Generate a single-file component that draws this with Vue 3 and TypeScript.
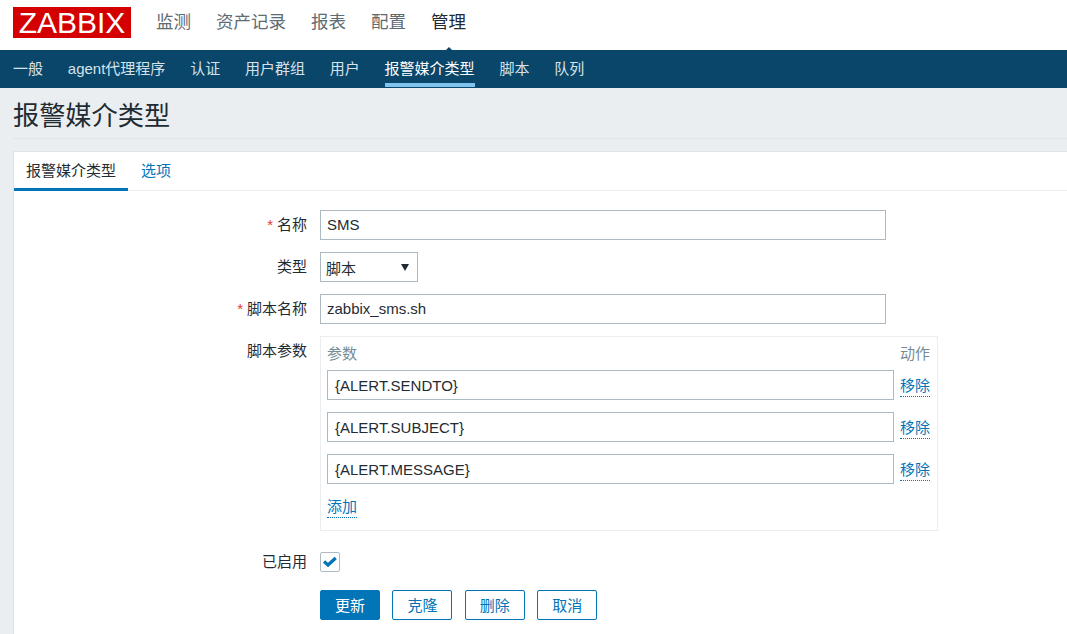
<script setup lang="ts">
const mainMenu = ['监测', '资产记录', '报表', '配置', '管理'];
const subMenu = ['一般', 'agent代理程序', '认证', '用户群组', '用户', '报警媒介类型', '脚本', '队列'];
const params = ['{ALERT.SENDTO}', '{ALERT.SUBJECT}', '{ALERT.MESSAGE}'];
const actions = ['克隆', '删除', '取消'];
</script>

<template>
  <div class="page">
    <header class="top">
      <div class="logo">ZABBIX</div>
      <nav class="main-nav">
        <a v-for="m in mainMenu" :key="m" :class="{ active: m === '管理' }">{{ m }}</a>
      </nav>
    </header>

    <nav class="sub-nav">
      <a v-for="s in subMenu" :key="s" :class="{ active: s === '报警媒介类型' }">{{ s }}</a>
    </nav>

    <div class="title-wrap">
      <h1>报警媒介类型</h1>
    </div>

    <section class="card">
      <div class="tabs">
        <a class="tab active">报警媒介类型</a>
        <a class="tab">选项</a>
      </div>

      <form class="form" @submit.prevent>
        <label class="label"><span class="req">*</span>名称</label>
        <div class="field"><div class="input wide">SMS</div></div>

        <label class="label">类型</label>
        <div class="field">
          <div class="select">脚本<span class="arrow"></span></div>
        </div>

        <label class="label"><span class="req">*</span>脚本名称</label>
        <div class="field"><div class="input wide">zabbix_sms.sh</div></div>

        <label class="label">脚本参数</label>
        <div class="field">
          <div class="params">
            <div class="params-head">
              <span>参数</span>
              <span>动作</span>
            </div>
            <div v-for="p in params" :key="p" class="param-row">
              <div class="input param-input">{{ p }}</div>
              <a class="link">移除</a>
            </div>
            <a class="link add">添加</a>
          </div>
        </div>

        <label class="label enabled-label">已启用</label>
        <div class="field enabled-field">
          <span class="check">
            <svg width="14" height="12" viewBox="0 0 14 12">
              <path d="M1 5.5 L5 9 L12.7 2" fill="none" stroke="#0275b8" stroke-width="3.2" />
            </svg>
          </span>
        </div>

        <div></div>
        <div class="buttons">
          <button type="button" class="btn primary">更新</button>
          <button v-for="a in actions" :key="a" type="button" class="btn">{{ a }}</button>
        </div>
      </form>
    </section>
  </div>
</template>

<style>
html, body {
  margin: 0;
  height: 634px;
  overflow: hidden;
  background: #fff;
}
</style>

<style scoped>
.page {
  width: 1067px;
  height: 634px;
  overflow: hidden;
  background: #ebeef0;
  font-family: "Liberation Sans", "Noto Sans CJK SC", sans-serif;
  font-size: 15px;
  color: #1f2c33;
}

.top {
  height: 50px;
  background: #fff;
  display: flex;
  padding-left: 13px;
}
.logo {
  width: 118px;
  height: 31px;
  margin-top: 7px;
  background: #d40000;
  color: #fff;
  font-size: 30px;
  line-height: 31px;
  text-align: center;
}
.main-nav {
  display: flex;
  gap: 25px;
  margin-left: 25px;
  font-size: 17.5px;
  line-height: 44px;
}
.main-nav a {
  position: relative;
  color: #5d6b73;
}
.main-nav a.active {
  color: #1f2c33;
}
.main-nav a.active::after {
  content: '';
  position: absolute;
  left: 50%;
  bottom: -6px;
  margin-left: -9px;
  border-left: 9px solid transparent;
  border-right: 9px solid transparent;
  border-bottom: 9px solid #0a466a;
}

.sub-nav {
  height: 38px;
  background: #0a466a;
  display: flex;
  gap: 24.8px;
  padding-left: 13px;
  line-height: 37px;
  color: #d6e2e9;
}
.sub-nav a {
  height: 37px;
  box-sizing: border-box;
}
.sub-nav a.active {
  color: #fff;
  border-bottom: 4px solid #7ec4ee;
}

.title-wrap {
  height: 50px;
  margin-left: 13px;
  border-bottom: 1px solid #e1e5e8;
}
h1 {
  margin: 0;
  font-size: 26.2px;
  font-weight: 400;
  line-height: 56px;
  color: #1f2c33;
}

.card {
  margin: 12px 0 0 13px;
  background: #fff;
  border: 1px solid #dfe4e7;
  border-right: none;
  height: 600px;
}

.tabs {
  display: flex;
  gap: 1px;
  height: 38px;
  border-bottom: 1px solid #ebeef0;
}
.tab {
  padding: 0 12px;
  line-height: 38px;
  height: 39px;
  box-sizing: border-box;
  color: #0275b8;
}
.tab.active {
  color: #1f2c33;
  border-bottom: 3px solid #0275b8;
}

.form {
  display: grid;
  grid-template-columns: 293px 1fr;
  column-gap: 13px;
  row-gap: 12px;
  padding-top: 19px;
}
.label {
  text-align: right;
  line-height: 30px;
}
.req {
  color: #e33734;
  margin-right: 4px;
}
.field {
  min-width: 0;
}
.input {
  box-sizing: border-box;
  height: 30px;
  border: 1px solid #acbbc2;
  background: #fff;
  padding: 0 6px;
  line-height: 28px;
}
.wide {
  width: 566px;
}
.select {
  box-sizing: border-box;
  width: 98px;
  height: 30px;
  border: 1px solid #acbbc2;
  padding-left: 5px;
  line-height: 31px;
  position: relative;
}
.arrow {
  position: absolute;
  right: 8px;
  top: 11px;
  border-left: 4px solid transparent;
  border-right: 4px solid transparent;
  border-top: 7px solid #1f2c33;
}

.params {
  box-sizing: border-box;
  width: 618px;
  height: 195px;
  border: 1px solid #ebeef0;
  padding: 6px 7px 0 6px;
}
.params-head {
  display: flex;
  justify-content: space-between;
  height: 27px;
  line-height: 21px;
  color: #768d99;
}
.param-row {
  display: flex;
  align-items: flex-start;
  gap: 6px;
  margin-bottom: 12px;
}
.param-input {
  width: 567px;
  padding-left: 7px;
  flex: none;
  line-height: 29px;
}
.link {
  color: #0275b8;
  line-height: 20px;
  margin-top: 6px;
  border-bottom: 1px dotted #0275b8;
}
.add {
  display: inline-block;
  margin-top: 1px;
}

.enabled-label {
  margin-top: 9px;
  line-height: 20px;
}
.enabled-field {
  margin-top: 9px;
  display: flex;
  align-items: flex-start;
  height: 20px;
}
.check {
  box-sizing: border-box;
  width: 20px;
  height: 20px;
  border: 1px solid #acbbc2;
  border-radius: 2px;
  display: flex;
  align-items: center;
  justify-content: center;
}

.buttons {
  display: flex;
  gap: 12.4px;
  margin-top: 6px;
}
.btn {
  box-sizing: border-box;
  width: 60px;
  height: 30px;
  padding: 0 0 1px;
  background: #fff;
  border: 1px solid #0275b8;
  border-radius: 2px;
  color: #0275b8;
  font: inherit;
}
.btn.primary {
  background: #0275b8;
  color: #fff;
}
</style>
